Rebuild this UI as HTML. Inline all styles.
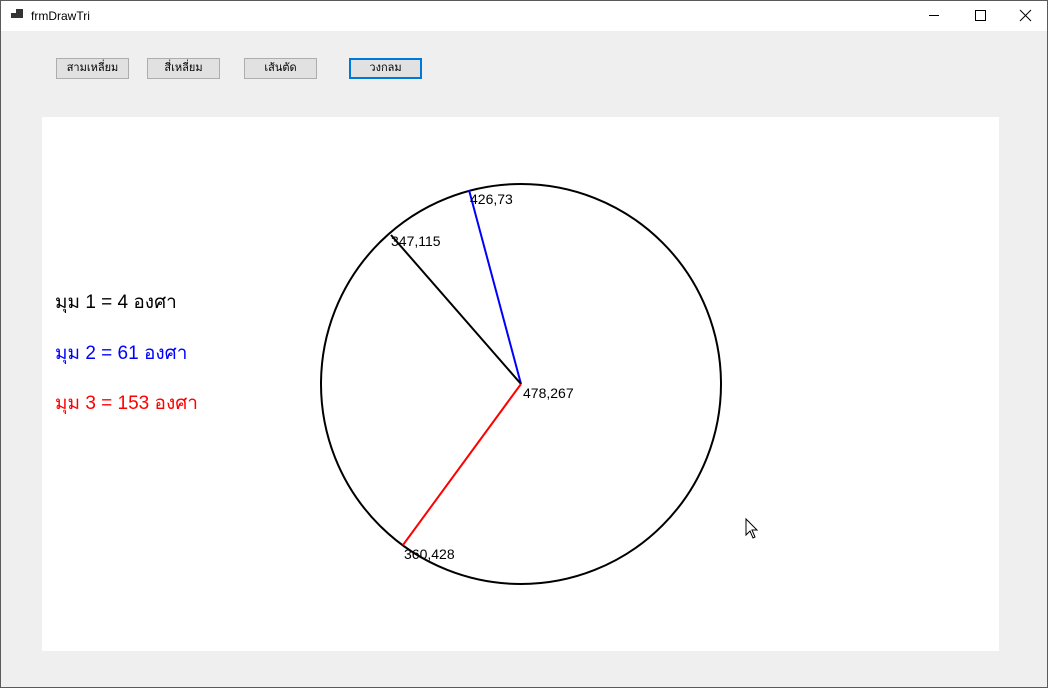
<!DOCTYPE html>
<html><head><meta charset="utf-8"><style>
body{margin:0;width:1048px;height:688px;overflow:hidden;background:#f0f0f0;font-family:"Liberation Sans","DejaVu Sans",sans-serif;position:relative}
.win{position:absolute;left:0;top:0;width:1046px;height:686px;border:1px solid #5a5a5a;background:#efefef}
.title{position:absolute;left:0;top:0;width:1046px;height:30px;background:#fff}
.title .t{position:absolute;left:30px;top:8px;font-size:12px;color:#000}
.btn{position:absolute;top:57px;height:21px;width:73px;border:1px solid #adadad;background:#e1e1e1;font-size:11px;text-align:center;line-height:19px;box-sizing:border-box}
.canvas{position:absolute;left:41px;top:116px;width:957px;height:534px;background:#fff}
.lbl{position:absolute;left:54px;font-size:19px}
</style></head><body><div class="win">
<div class="title">
<svg style="position:absolute;left:10px;top:8px" width="14" height="12"><rect x="0" y="4" width="5" height="5" fill="#333"/><rect x="5" y="0" width="7" height="9" fill="#333"/></svg>
<span class="t">frmDrawTri</span>
<svg style="position:absolute;left:926px;top:8px" width="110" height="14" stroke="#000" fill="none" stroke-width="1"><line x1="2" y1="6.5" x2="12" y2="6.5"/><rect x="48.5" y="1.5" width="10" height="10"/><line x1="93" y1="1" x2="104" y2="12"/><line x1="104" y1="1" x2="93" y2="12"/></svg>
</div>
<div class="btn" style="left:55px">สามเหลี่ยม</div>
<div class="btn" style="left:146px">สี่เหลี่ยม</div>
<div class="btn" style="left:243px">เส้นตัด</div>
<div class="btn" style="left:348px;border:2px solid #0078d7;line-height:17px">วงกลม</div>
<div class="canvas"></div>
<svg style="position:absolute;left:-1px;top:-1px" width="1048" height="688">
<circle cx="521" cy="384" r="200" fill="none" stroke="#000" stroke-width="2"/>
<line x1="521" y1="384" x2="469" y2="190" stroke="#00f" stroke-width="2"/>
<line x1="521" y1="384" x2="391" y2="235" stroke="#000" stroke-width="2"/>
<line x1="521" y1="384" x2="403" y2="545" stroke="#f00" stroke-width="2"/>
<g font-family="Liberation Sans,sans-serif" font-size="14" fill="#000">
<text x="470" y="204">426,73</text>
<text x="391" y="246">347,115</text>
<text x="523" y="398">478,267</text>
<text x="404" y="559">360,428</text>
</g>
<path d="M746 519 L746 535 L750 531 L753 538 L755 537 L752 530 L757 530 Z" fill="#fff" stroke="#000" stroke-width="1"/>
</svg>
<div class="lbl" style="top:286px;color:#000">มุม 1 = 4 องศา</div>
<div class="lbl" style="top:337px;color:#00f">มุม 2 = 61 องศา</div>
<div class="lbl" style="top:387px;color:#f00">มุม 3 = 153 องศา</div>
</div></body></html>
